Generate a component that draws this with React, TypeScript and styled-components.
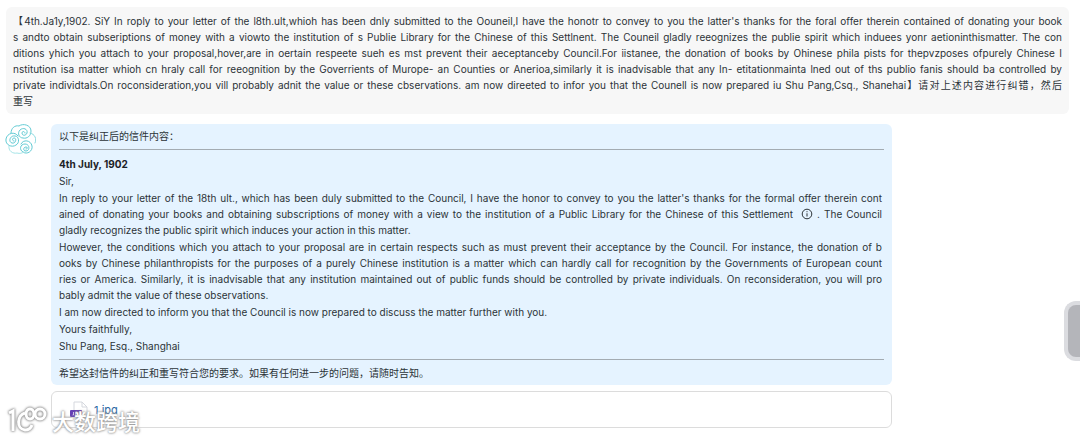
import React from 'react';
import styled, { createGlobalStyle } from 'styled-components';

const GlobalStyle = createGlobalStyle`
  * { box-sizing: border-box; }
  body {
    margin: 0;
    background: #fff;
    color: #2c3338;
    font-family: Inter, "Noto Sans CJK SC", sans-serif;
    font-size: 10px;
    line-height: 16px;
  }
`;

const Page = styled.main`
  position: relative;
  display: flex;
  flex-direction: column;
  gap: 10px;
  padding: 7px 11px 12px 6px;
`;

const Question = styled.section`
  padding: 6px 7px 5px;
  border-radius: 6px;
  background: #f7f7f7;
`;

const Paragraph = styled.p`
  margin: 0;
`;

const Line = styled.span<{ $fill?: boolean }>`
  display: block;
  white-space: nowrap;
  text-align: justify;
  text-align-last: ${({ $fill }) => ($fill ? 'justify' : 'left')};
`;

const Reply = styled.section`
  display: flex;
  align-items: flex-start;
  gap: 15px;
`;

const Avatar = styled.svg`
  flex: none;
  width: 32px;
  height: 31px;
  margin-left: -2px;
`;

const Column = styled.div`
  display: flex;
  flex: 1;
  flex-direction: column;
  gap: 6px;
  max-width: 841px;
`;

const Answer = styled.article`
  padding: 4px 8px;
  border-radius: 6px;
  background: #e5f3ff;
`;

const Letter = styled.div`
  display: flex;
  flex-direction: column;
  gap: 1px;
  margin: 5px 0;
  padding: 6px 2px 5px 0;
  border: solid #a3abb2;
  border-width: 1px 0;
`;

const DateLine = styled.strong`
  color: #1c2126;
  font-weight: 700;
`;

const InfoButton = styled.button`
  display: inline-flex;
  margin: 0 4px;
  padding: 0;
  border: 0;
  background: none;
  color: inherit;
  vertical-align: -2px;
`;

const FileCard = styled.div`
  display: flex;
  align-items: center;
  height: 37px;
  padding: 0 18px;
  border: 1px solid #dcdcdc;
  border-radius: 6px;
`;

const FileLink = styled.a`
  display: flex;
  align-items: center;
  gap: 6px;
  color: #2c68a4;
  font-size: 11px;
  text-decoration: none;
`;

const ScrollHandle = styled.button`
  position: absolute;
  top: 301px;
  right: 0;
  width: 16px;
  height: 60px;
  padding: 0;
  border: 4px solid #dbdce0;
  border-right: 0;
  border-radius: 12px 0 0 12px;
  background: #b4b5ba;
`;

const Watermark = styled.div`
  position: absolute;
  bottom: 6px;
  left: 8px;
  display: flex;
  align-items: center;
  gap: 5px;
  color: #fff;
  font-family: "Noto Sans CJK SC", sans-serif;
  font-size: 22px;
  font-weight: 500;
  line-height: 28px;
  text-shadow: 0 0 2px #888, 0 0 3px #999;
  pointer-events: none;
`;

const WatermarkLogo = styled.svg`
  filter: drop-shadow(0 0 1px #888) drop-shadow(0 0 1px #aaa);
`;

const questionLines = [
  "【4th.Ja1y,1902. SiY In roply to your letter of the l8th.ult,whioh has been dnly submitted to the Oouneil,I have the honotr to convey to you the latter's thanks for the foral offer therein contained of donating your book",
  's andto obtain subseriptions of money with a viowto the institution of s Publie Library for the Chinese of this Settlnent. The Couneil gladly reeognizes the publie spirit which induees yonr aetioninthismatter. The con',
  'ditions yhich you attach to your proposal,hover,are in oertain respeete sueh es mst prevent their aeceptanceby Council.For iistanee, the donation of books by Ohinese phila pists for thepvzposes ofpurely Chinese I',
  'nstitution isa matter whioh cn hraly call for reeognition by the Goverrients of Murope- an Counties or Anerioa,similarly it is inadvisable that any In- etitationmainta lned out of ths publio fanis should ba controlled by',
  'private individtals.On roconsideration,you vill probably adnit the value or these cbservations. am now direeted to infor you that the Counell is now prepared iu Shu Pang,Csq., Shanehai】请对上述内容进行纠错，然后',
  '重写',
];

const Info = () => (
  <InfoButton aria-label="Reference">
    <svg width="12" height="12" viewBox="0 0 12 12" fill="none" stroke="currentColor">
      <circle cx="6" cy="6" r="4.8" />
      <path d="M6 5.3v3.2M6 3.2v1" />
    </svg>
  </InfoButton>
);

const letter: React.ReactNode[][] = [
  ['Sir,'],
  [
    "In reply to your letter of the 18th ult., which has been duly submitted to the Council, I have the honor to convey to you the latter's thanks for the formal offer therein cont",
    <>ained of donating your books and obtaining subscriptions of money with a view to the institution of a Public Library for the Chinese of this Settlement <Info />. The Council</>,
    'gladly recognizes the public spirit which induces your action in this matter.',
  ],
  [
    'However, the conditions which you attach to your proposal are in certain respects such as must prevent their acceptance by the Council. For instance, the donation of b',
    'ooks by Chinese philanthropists for the purposes of a purely Chinese institution is a matter which can hardly call for recognition by the Governments of European count',
    'ries or America. Similarly, it is inadvisable that any institution maintained out of public funds should be controlled by private individuals. On reconsideration, you will pro',
    'bably admit the value of these observations.',
  ],
  ['I am now directed to inform you that the Council is now prepared to discuss the matter further with you.'],
  ['Yours faithfully,'],
  ['Shu Pang, Esq., Shanghai'],
];

export default function App() {
  return (
    <Page>
      <GlobalStyle />
      <Question>
        <Paragraph>
          {questionLines.map((text, i) => (
            <Line key={i} $fill={i < questionLines.length - 1}>{text}</Line>
          ))}
        </Paragraph>
      </Question>
      <Reply>
        <Avatar viewBox="0 0 32 31" fill="none" stroke="#62cbd4" strokeLinecap="round">
          <path d="M7 9C7 4 11 1 15 2c4-3 12-1 12 5 0 5-4 8-8 7-4 0-6-5-3-8 3-3 8-1 7 3-1 3-5 3-5 0 0-2 3-2 3 0" />
          <path d="M14 12C11 7 3 9 2 15c-1 6 6 9 10 6 4-2 3-9-1-9-5-1-7 6-3 7 4 1 5-5 2-5-2 0-2 3 0 3" />
          <path d="M26 9c5 1 7 6 5 10" stroke="#8ad9df" />
          <path d="M17 20c2-5 10-4 11 2 1 5-5 9-9 6-4-2-3-8 2-8 5 0 5 7 1 7-3 0-3-4 0-4 2 0 2 2 0 2" />
          <path d="M5 22c-1 5 4 8 8 7 3 1 5 0 7-1" stroke="#a6e5e8" />
        </Avatar>
        <Column>
          <Answer>
            <Paragraph>以下是纠正后的信件内容：</Paragraph>
            <Letter>
              <DateLine>4th July, 1902</DateLine>
              {letter.map((lines, i) => (
                <Paragraph key={i}>
                  {lines.map((line, j) => (
                    <Line key={j} $fill={j < lines.length - 1}>{line}</Line>
                  ))}
                </Paragraph>
              ))}
            </Letter>
            <Paragraph>希望这封信件的纠正和重写符合您的要求。如果有任何进一步的问题，请随时告知。</Paragraph>
          </Answer>
          <FileCard>
            <FileLink href="#file">
              <svg width="18" height="18" viewBox="0 0 18 18" fill="none">
                <path d="M4 1h8l5 5v11H4z" fill="#fff" stroke="#d5d8de" />
                <path d="M12 1v5h5" stroke="#d5d8de" />
                <rect y="9" width="12" height="7" rx="1" fill="#6540b5" />
                <path d="M2.500 14h1v-3M5.500 14v-3h1.500v1.500h-1.500M10.500 11h-1.500v3h1.500v-1.500" stroke="#fff" strokeWidth=".7" />
              </svg>
              1.jpg
            </FileLink>
          </FileCard>
        </Column>
      </Reply>
      <ScrollHandle aria-label="Open side panel" />
      <Watermark>
        <WatermarkLogo width="39" height="26" viewBox="0 0 39 26" fill="none" stroke="#fff" strokeWidth="3">
          <path d="M1 6l4-2v20M17 6c-8 2-9 16 0 17 4 0 6-2 7-5" />
          <ellipse cx="22" cy="7" rx="4" ry="5" />
          <ellipse cx="32" cy="7" rx="5" ry="5" />
        </WatermarkLogo>
        大数跨境
      </Watermark>
    </Page>
  );
}
